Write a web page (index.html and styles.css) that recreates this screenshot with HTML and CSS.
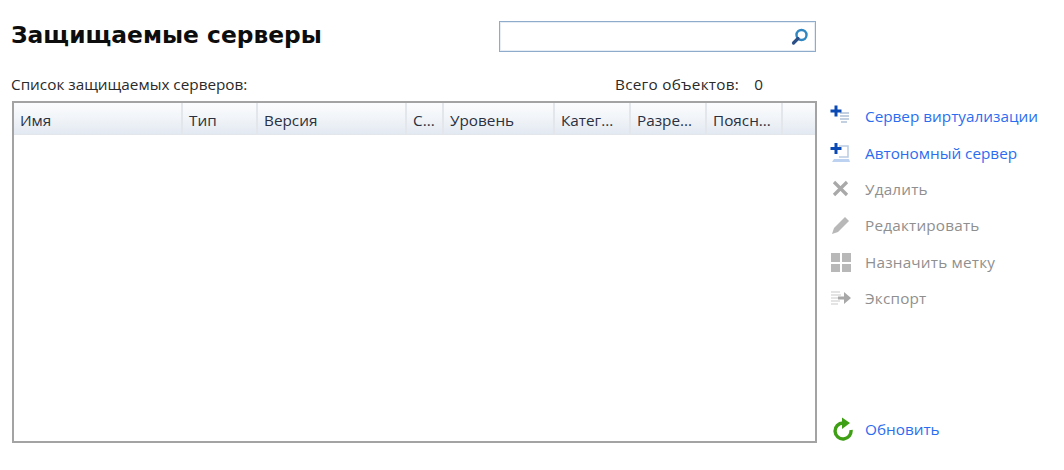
FILE: index.html
```html
<!DOCTYPE html>
<html lang="ru">
<head>
<meta charset="utf-8">
<title>Защищаемые серверы</title>
<link rel="stylesheet" href="styles.css">
</head>
<body>
<div class="page">
  <div class="top">
    <h1 class="title">Защищаемые серверы</h1>
    <div class="search">
      <svg class="search-icon" width="20" height="20" viewBox="0 0 20 20"><circle cx="11.500" cy="8" r="5" fill="#fff" stroke="#2f86c0" stroke-width="2.400"/><path d="M8 11.500 3.500 16" stroke="#2b4f86" stroke-width="3.200" stroke-linecap="round"/></svg>
    </div>
  </div>
  <div class="meta">
    <span class="list-label">Список защищаемых серверов:</span>
    <span class="total"><span>Всего объектов:</span><span>0</span></span>
  </div>
  <div class="main">
    <div class="table">
      <div class="thead">
        <div class="th c1">Имя</div>
        <div class="th c2">Тип</div>
        <div class="th c3">Версия</div>
        <div class="th c4">С...</div>
        <div class="th c5">Уровень</div>
        <div class="th c6">Катег...</div>
        <div class="th c6">Разре...</div>
        <div class="th c6">Поясн...</div>
      </div>
    </div>
    <div class="actions">
      <a class="action link">
        <svg width="24" height="24" viewBox="0 0 24 24"><path d="M11 9h9M11 12h9M11 15h9M12 18h6" stroke="#c3d0e2" stroke-width="2"/><path d="M7 1.500v11M1.500 7h11" stroke="#0b4ab4" stroke-width="3"/></svg>
        <span>Сервер виртуализации</span>
      </a>
      <a class="action link">
        <svg width="24" height="24" viewBox="0 0 24 24"><path d="M10 5h9v11h-9" fill="none" stroke="#b9cbe4" stroke-width="1.500"/><path d="M3 21l2-3h15l1 3z" fill="#bcd2f0"/><path d="M7 2v11M1.500 7.500h11" stroke="#0b4ab4" stroke-width="3"/></svg>
        <span>Автономный сервер</span>
      </a>
      <a class="action off">
        <svg width="24" height="24" viewBox="0 0 24 24"><path d="M5 5l13 13M18 5 5 18" stroke="#a9a9a9" stroke-width="3.200"/></svg>
        <span>Удалить</span>
      </a>
      <a class="action off">
        <svg width="24" height="24" viewBox="0 0 24 24"><path d="M3 21l2-6L16 4l4 4L9 19z" fill="#b8b8b8"/></svg>
        <span>Редактировать</span>
      </a>
      <a class="action off">
        <svg width="24" height="24" viewBox="0 0 24 24"><path d="M2 3h9v9H2zM13 3h9v9h-9zM2 14h9v8H2zM13 14h9v8h-9z" fill="#b8b8b8"/></svg>
        <span>Назначить метку</span>
      </a>
      <a class="action off">
        <svg width="24" height="24" viewBox="0 0 24 24"><path d="M2 6h9M2 9h10M2 12h10M2 15h9M2 18h7" stroke="#dcdcdc" stroke-width="1.500"/><path d="M9 10.500h6V6l7 6-7 6v-4.500H9z" fill="#a8a8a8"/></svg>
        <span>Экспорт</span>
      </a>
      <a class="action link refresh">
        <svg width="24" height="24" viewBox="0 0 24 24"><path d="M14 6A8 8 0 1 0 22 13" fill="none" stroke="#3f9f14" stroke-width="3.400"/><path d="M13 .5 21 6l-8 6z" fill="#3f9f14"/></svg>
        <span>Обновить</span>
      </a>
    </div>
  </div>
</div>
</body>
</html>
```
FILE: styles.css
```css
* { box-sizing: border-box; }
html, body { margin: 0; background: #fff; }
body { font-family: "Open Sans", "Noto Sans", sans-serif; font-size: 15.3px; color: #2a2a2a; }
.page { width: 1064px; height: 470px; padding: 21px 0 0 12px; display: flex; flex-direction: column; }
.top { display: flex; align-items: center; height: 31px; }
.title { margin: 0 0 2px -1px; width: 488px; font: bold 23.35px/29px "DejaVu Sans", sans-serif; color: #0d0d0d; }
.search { width: 317px; height: 31px; border: 1px solid #8fabcc; box-shadow: inset 0 0 0 1px #e6edf5; display: flex; align-items: center; justify-content: flex-end; padding-right: 5px; }
.meta { display: flex; height: 23px; margin-top: 21px; line-height: 22px; margin-left: -1px; margin-bottom: 5px; }
.list-label { width: 604px; }
.total { display: flex; gap: 15px; letter-spacing: .27px; }
.main { display: flex; height: 342px; }
.table { width: 805px; height: 342px; border: 2px solid #a3a3a3; }
.thead { display: flex; height: 31px; background: linear-gradient(#fbfcfd, #f2f5f9 45%, #e3e9f2); box-shadow: 0 1px 0 #e3e6ea; }
.th { border-right: 2px solid #e3e6ea; line-height: 35px; padding-left: 6px; white-space: nowrap; overflow: hidden; color: #2a3040; }
.c1 { width: 169px; }
.c2 { width: 75px; }
.c3 { width: 149px; }
.c4 { width: 37px; }
.c5 { width: 111px; }
.c6 { width: 76px; }
.actions { display: flex; flex-direction: column; flex: 1; padding: 0 0 0 12px; margin-top: -3px; }
.action { display: flex; align-items: center; gap: 12px; height: 36.4px; white-space: nowrap; }
.action svg { flex: none; }
.link { color: #2b6df0; }
.off { color: #8f8f8f; letter-spacing: .2px; }
.refresh { margin-top: auto; margin-bottom: -4px; letter-spacing: 0; }
```
